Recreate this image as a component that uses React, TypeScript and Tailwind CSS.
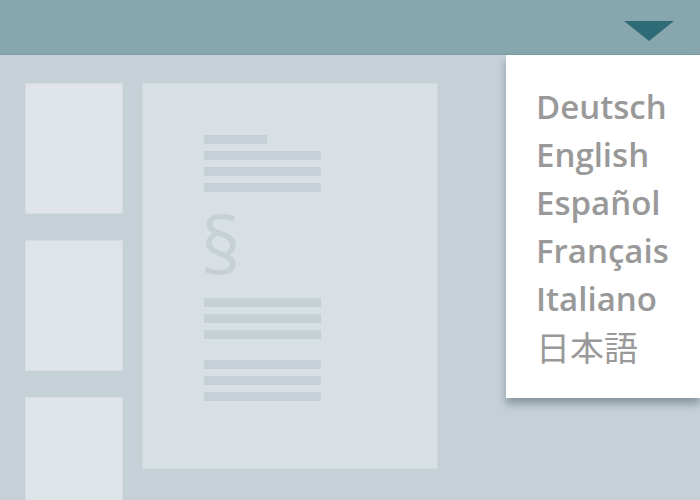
import React from "react";

const Bar = ({ w = "w-[117px]" }: { w?: string }) => (
  <div className={`h-[9px] ${w} bg-[#c6d0d7]`} />
);

export default function App() {
  const langs = ["Deutsch", "English", "Español", "Français", "Italiano"];
  return (
    <div className="relative w-[700px] h-[500px] overflow-hidden bg-[#c6d1d7] flex flex-col" style={{ fontFamily: '"Open Sans", "Noto Sans", sans-serif' }}>
      <div className="h-[55px] shrink-0 bg-[#87a6ae] border-b border-[#7f9da5] flex justify-end items-start pr-[26px] pt-[21px]">
        <svg width="50" height="20" viewBox="0 0 50 20">
          <polygon points="0,0 50,0 25,20" fill="#2f6b76" />
        </svg>
      </div>
      <div className="flex gap-[19px] pl-[25px] pt-[28px]">
        <div className="flex flex-col gap-[26px] w-[98px] shrink-0">
          <div className="h-[131px] bg-[#dfe4e8] border border-[#d5dce1]" />
          <div className="h-[131px] bg-[#dfe4e8] border border-[#d5dce1]" />
          <div className="h-[131px] bg-[#dfe4e8] border border-[#d5dce1]" />
        </div>
        <div className="w-[296px] h-[386px] bg-[#d9e0e4] border border-[#d0d8dd] pl-[61px] pt-[51px] flex flex-col">
          <div className="flex flex-col gap-[7px]">
            <Bar w="w-[63px]" />
            <Bar />
            <Bar />
            <Bar />
          </div>
          <div className="h-[106px] text-[#c6d0d7] text-[78px] leading-[106px] -ml-[3px]" style={{ fontFamily: '"Open Sans", sans-serif' }}>§</div>
          <div className="flex flex-col gap-[7px]">
            <Bar />
            <Bar />
            <Bar />
          </div>
          <div className="flex flex-col gap-[7px] mt-[21px]">
            <Bar />
            <Bar />
            <Bar />
          </div>
        </div>
      </div>
      <div className="absolute left-[506px] top-[55px] w-[194px] h-[343px] bg-white shadow-[0_6px_8px_rgba(60,80,90,0.45)] pl-[30px] pt-[28px]">
        {langs.map((l) => (
          <div key={l} className="text-[33px] leading-[48px] font-semibold text-[#999999]">{l}</div>
        ))}
        <div className="text-[34px] leading-[48px] text-[#999999]" style={{ fontFamily: '"Noto Sans CJK JP", sans-serif' }}>日本語</div>
      </div>
    </div>
  );
}
